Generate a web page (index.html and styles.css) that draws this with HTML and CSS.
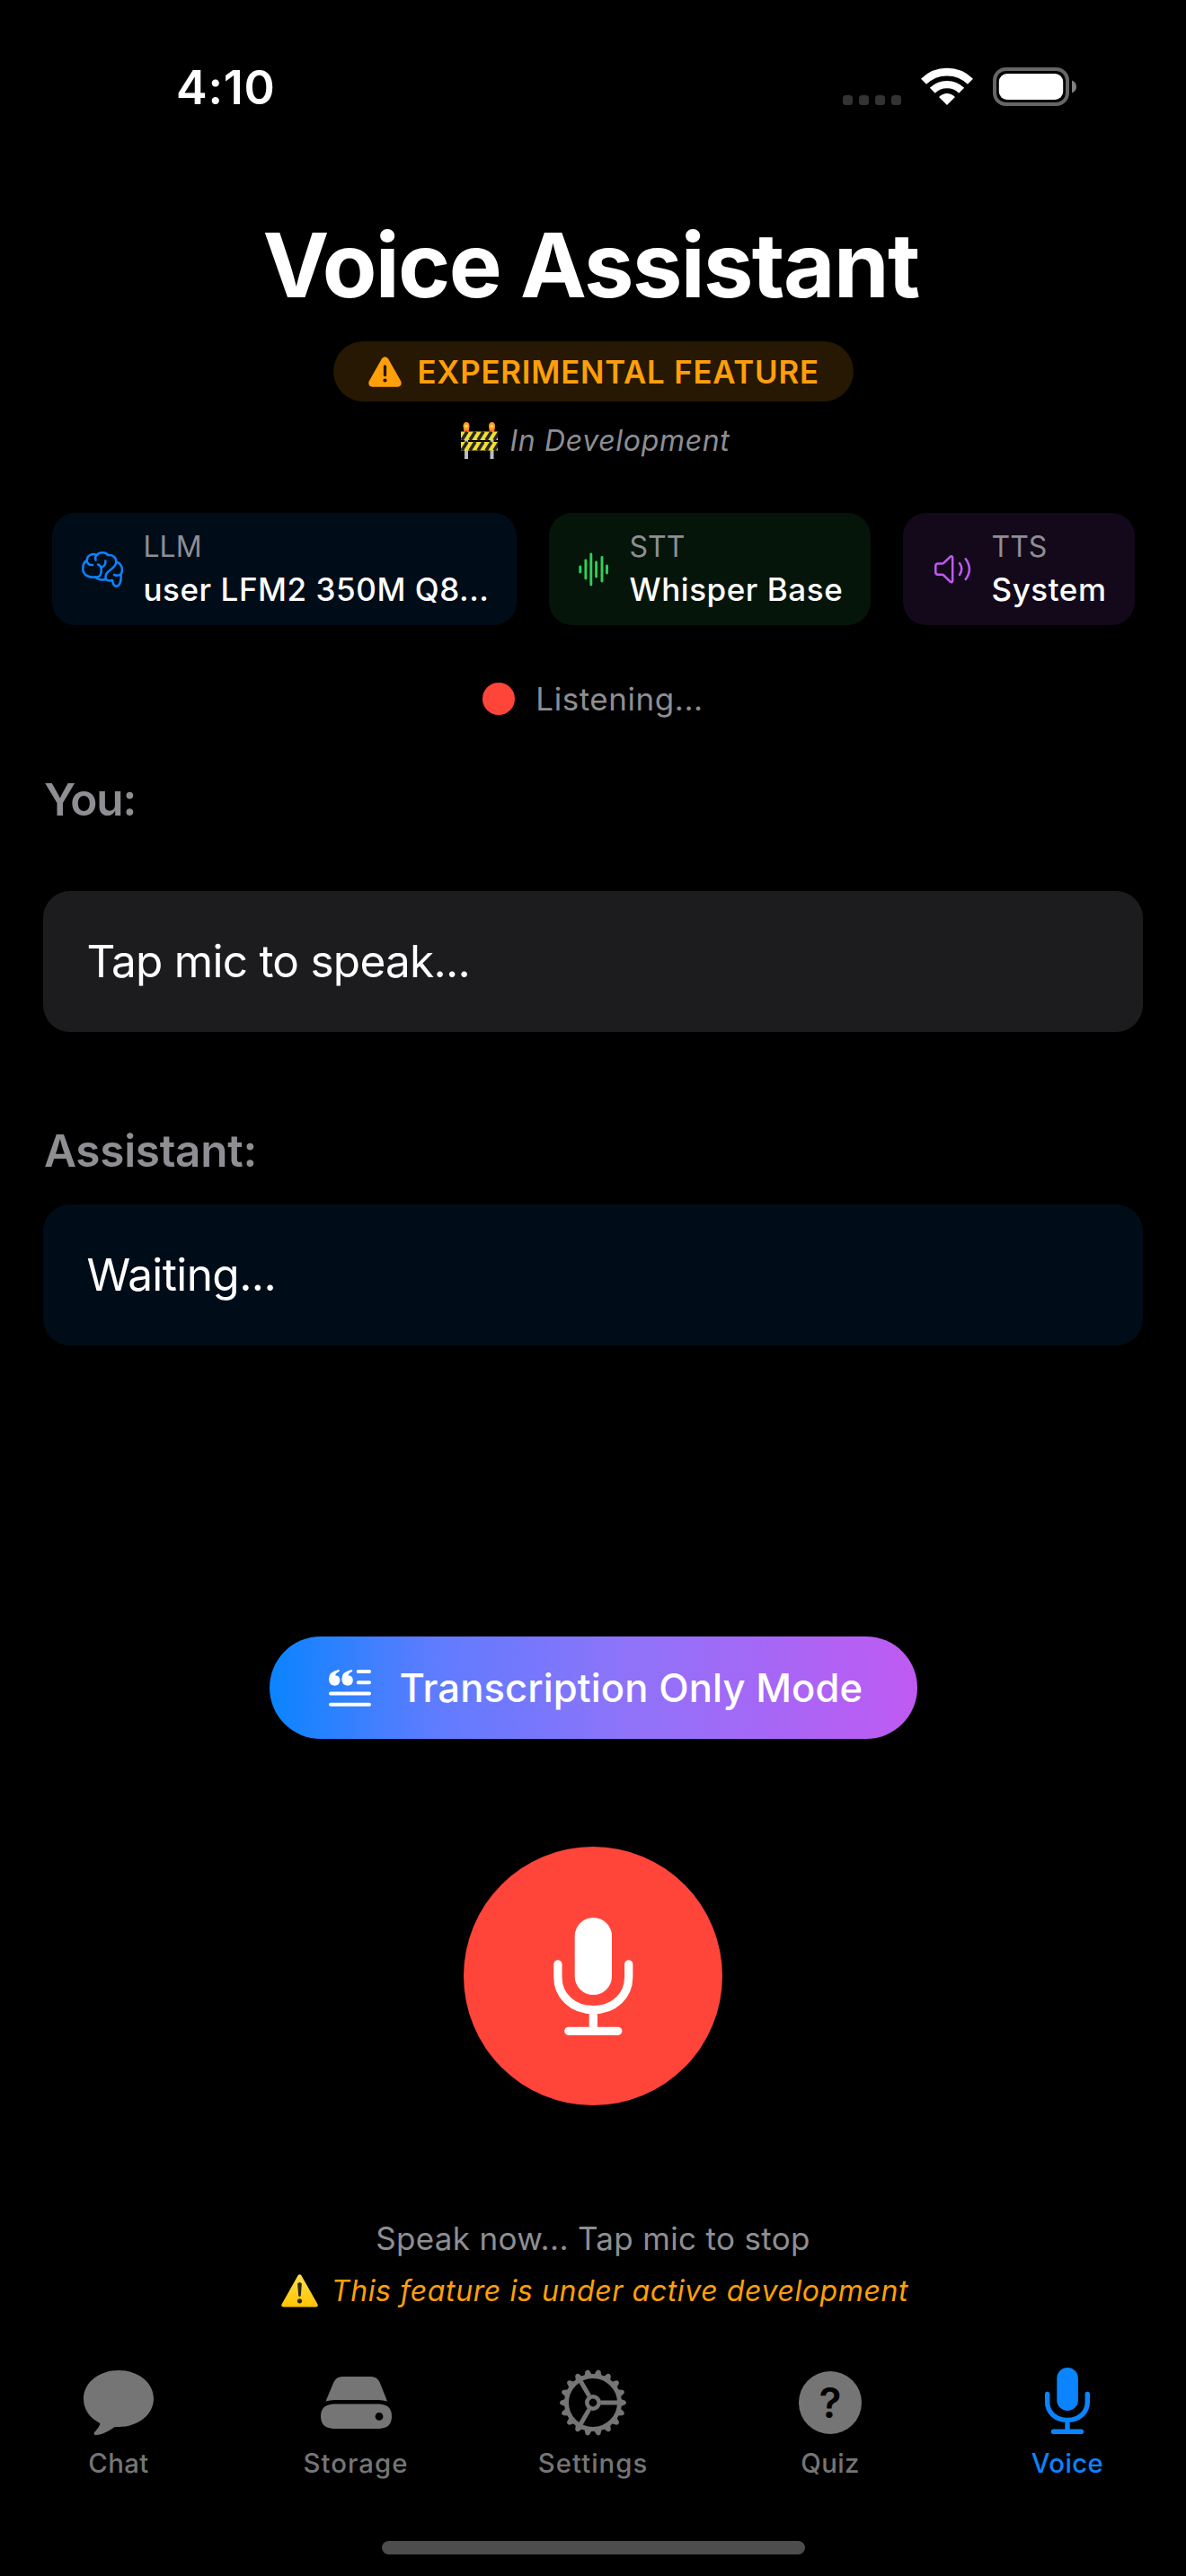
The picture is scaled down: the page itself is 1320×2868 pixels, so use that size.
FILE: index.html
```html
<!DOCTYPE html>
<html lang="en">
<head>
<meta charset="utf-8">
<title>Voice Assistant</title>
<link rel="stylesheet" href="styles.css">
</head>
<body>
<div class="screen">
  <header class="status-bar">
    <span class="clock">4:10</span>
    <div class="status-icons">
      <div class="cell"><i></i><i></i><i></i><i></i></div>
      <svg class="wifi" width="58" height="42" viewBox="0 0 58 42">
        <g fill="none" stroke="#fff">
          <path d="M3 15.800A37 37 0 0 1 55 15.800" stroke-width="8.600"/>
          <path d="M12.800 25.800A23 23 0 0 1 45.200 25.800" stroke-width="8.400"/>
        </g>
        <path d="M29 42L20 33Q29 25 38 33Z" fill="#fff"/>
      </svg>
      <svg class="battery" width="93" height="43" viewBox="0 0 93 43">
        <rect x="2" y="2" width="81" height="39" rx="12.500" fill="none" stroke="#666" stroke-width="4"/>
        <rect x="6.800" y="7" width="71.400" height="29" rx="9" fill="#fff"/>
        <path d="M88 14.500Q93 16.500 93 21.500T88 28.500Z" fill="#808080"/>
      </svg>
    </div>
  </header>

  <main class="content">
    <h1 class="title">Voice Assistant</h1>
    <div class="badge">
      <svg width="37" height="34" viewBox="0 0 37 34">
        <path d="M15 2.300Q18.500-1.800 22 2.300L36.300 27.500Q38 33 32.500 33.800H4.500Q-1 33 .7 27.500Z" fill="#ff9f0a"/>
        <path d="M18.500 11V20.500" stroke="#261802" stroke-width="3.300" stroke-linecap="round"/>
        <circle cx="18.500" cy="26.500" r="2.100" fill="#261802"/>
      </svg>
      <span>EXPERIMENTAL FEATURE</span>
    </div>
    <div class="dev-note">
      <svg width="41" height="41" viewBox="0 0 41 41">
        <path d="M6 9V41M34.500 9V41" stroke="#b9bcc0" stroke-width="4"/>
        <g fill="#f3df2b"><rect y="10.500" width="41" height="9.500"/><rect y="22" width="41" height="9.500"/></g>
        <path d="M1 20L7 10.500M10 20L16 10.500M19 20L25 10.500M28 20L34 10.500M37 20L43 10.500M1 31.500L7 22M10 31.500L16 22M19 31.500L25 22M28 31.500L34 22M37 31.500L43 22" stroke="#26262a" stroke-width="3.600"/>
        <g fill="#f2602c"><path d="M3 7H9V10.500H3ZM31.500 7H37.500V10.500H31.500Z"/></g>
        <g fill="#ff9a1f"><ellipse cx="6" cy="4.500" rx="3.500" ry="4.500"/><ellipse cx="34.500" cy="4.500" rx="3.500" ry="4.500"/></g>
        <g fill="#ffe45c"><circle cx="6" cy="4.500" r="1.700"/><circle cx="34.500" cy="4.500" r="1.700"/></g>
      </svg>
      <em>In Development</em>
    </div>

    <section class="models">
      <div class="chip llm">
        <svg width="46" height="40" viewBox="0 0 46 40" fill="none" stroke="#0a84ff" stroke-width="2.500" stroke-linecap="round" stroke-linejoin="round">
          <path d="M5.700 10C5.500 4.500 11.500 1.500 16.800 4C19.500 .5 26.500 .3 29 4C34.500 3.500 38.500 6.500 38.300 11.500C44.500 13 46.500 20.500 43.500 25.500C44 31 43 38.700 38.500 38.700C35 38.700 34.500 35 34 32C31 33 28.500 32.300 26.800 31C23 32 17.500 31.500 14.800 28.500C7 29.500 1.300 25.500 1.300 19.500C1.300 15 2.500 11.500 5.700 10Z"/>
          <path d="M5.700 10C6 13.500 8.500 15.500 12 15M16.800 4C15.300 5 14.800 7.500 15.500 9.500M18 14.500C22.500 16 22.500 22 20.700 26C19.500 28.300 17 28.800 14.800 28.500M21.600 17.500C25 17 27 14 26.300 10.500M38.300 11.500C38 20 27.500 20 26.700 27C26.500 28.500 26.500 29.500 26.800 31M43.500 25.500C41 27 38.500 27 36 26"/>
        </svg>
        <div class="chip-text"><span class="kind">LLM</span><span class="model">user LFM2 350M Q8...</span></div>
      </div>
      <div class="chip stt">
        <svg width="34" height="38" viewBox="0 0 34 38" stroke="#30d158" stroke-width="2.900" stroke-linecap="round">
          <path d="M1.800 16V22M7.900 9V29M13.800 2V36M19.600 11V27M26 5.500V32M31.500 15V23"/>
        </svg>
        <div class="chip-text"><span class="kind">STT</span><span class="model">Whisper Base</span></div>
      </div>
      <div class="chip tts">
        <svg width="41" height="32" viewBox="0 0 41 32" fill="none" stroke="#bf5af2" stroke-width="2.500" stroke-linecap="round" stroke-linejoin="round">
          <path d="M4 9.500H8.500Q9.600 9.500 10.300 8.800L17.600 1.900Q20 .3 20.200 3V28.500Q20 31.200 17.600 29.600L10.300 22.500Q9.600 21.700 8.500 21.700H4Q1.300 21.700 1.300 19V12.200Q1.300 9.500 4 9.500Z"/>
          <path d="M28 9Q32.500 15.500 28 22M34.800 4.300Q43 15.500 34.800 27"/>
        </svg>
        <div class="chip-text"><span class="kind">TTS</span><span class="model">System</span></div>
      </div>
    </section>

    <div class="session"><i class="rec-dot"></i><span>Listening...</span></div>

    <section class="exchange">
      <h2 class="speaker you">You:</h2>
      <div class="bubble user">Tap mic to speak...</div>
      <h2 class="speaker bot">Assistant:</h2>
      <div class="bubble reply">Waiting...</div>
    </section>

    <button class="mode" type="button">
      <svg width="47" height="41" viewBox="0 0 47 41" fill="#fff">
        <path id="q" d="M10.800 0Q12.800 .4 11.300 2.100Q7.800 3.600 7 6.200Q12.400 6.600 12.400 11.800Q12.200 17.600 6.400 17.700Q0 17.400 0 10Q.3 2 10.800 0Z"/>
        <use href="#q" x="14.400"/>
        <path d="M32.700 2H45M32.700 14.300H45M2 26.500H45M2 38.700H45" stroke="#fff" stroke-width="4" stroke-linecap="round"/>
      </svg>
      <span>Transcription Only Mode</span>
    </button>

    <button class="mic" type="button" aria-label="Microphone">
      <svg width="89" height="131" viewBox="0 0 89 131">
        <rect x="23.700" y="0" width="41.300" height="86" rx="20.600" fill="#fff"/>
        <path d="M4.900 51.800V66C4.900 87 21 102.700 44.300 102.700S83.700 87 83.700 66V51.800M44.300 102.700V126M16.800 126.300H71.800" fill="none" stroke="#fff" stroke-width="9.300" stroke-linecap="round"/>
      </svg>
    </button>

    <p class="hint">Speak now... Tap mic to stop</p>
    <div class="caution">
      <svg width="41" height="37" viewBox="0 0 41 37">
        <defs><linearGradient id="sun" x1="0" y1="0" x2="0" y2="1"><stop offset="0" stop-color="#ffdf4f"/><stop offset="1" stop-color="#ffc400"/></linearGradient></defs>
        <path d="M18.500 1.500Q20.500-.8 22.500 1.500L40.500 33.500Q41.500 36.300 38.500 36.500H2.500Q-.5 36.300 .5 33.500Z" fill="url(#sun)"/>
        <path d="M18.100 10.500Q20.500 7.500 22.900 10.500L21.800 24Q20.500 25.800 19.200 24Z" fill="#2b2716"/>
        <circle cx="20.500" cy="29.800" r="2.600" fill="#2b2716"/>
      </svg>
      <em>This feature is under active development</em>
    </div>
  </main>

  <nav class="tabs">
    <a class="tab chat">
      <svg width="78" height="74" viewBox="0 0 78 74" fill="currentColor">
        <path d="M39 1C60.500 1 78 14.500 78 32.500S60.500 64 39 64C37.500 64 35.500 63.900 34.300 64.300C28.500 68.500 20 73.500 13 73C11.300 72.500 11.300 71 12.300 69.800C15.500 66 18.500 62.500 18.300 60C7 54 0 45 0 32.500C0 14.500 17.500 1 39 1Z"/>
      </svg>
      <span>Chat</span>
    </a>
    <a class="tab storage">
      <svg width="79" height="74" viewBox="0 0 79 74" fill="currentColor">
        <path d="M24 8H56Q62.500 8 65.500 14L74 35.600Q69 34 64 34H15.500Q10.500 34 5.500 35.600L14.500 14Q17.500 8 24 8Z"/>
        <path fill-rule="evenodd" d="M14 38.500H65.500Q79 39.300 79 52.300T65.500 66H14Q0 65.300 0 52.300T14 38.500ZM65 48A4.400 4.400 0 1 0 65 56.800A4.400 4.400 0 1 0 65 48Z"/>
      </svg>
      <span class="wide">Storage</span>
    </a>
    <a class="tab settings">
      <svg width="76" height="74" viewBox="-38 -37 76 74" fill="none" stroke="currentColor" stroke-width="5">
        <circle r="29.500"/><circle r="6.700" stroke-width="4.600"/>
        <path d="M8.500 0H28M-4.250 7.400L-14 24.200M-4.250-7.400L-14-24.200"/>
        <g fill="currentColor" stroke="none">
          <g id="t6"><g id="t3"><path id="t" d="M30-4.600L35.700-2.300Q38.300 0 35.700 2.300L30 4.600Z"/><use href="#t" transform="rotate(20)"/><use href="#t" transform="rotate(40)"/></g><use href="#t3" transform="rotate(60)"/></g>
          <use href="#t6" transform="rotate(120)"/><use href="#t6" transform="rotate(240)"/>
        </g>
      </svg>
      <span class="wide">Settings</span>
    </a>
    <a class="tab quiz">
      <div class="round"><b>?</b></div>
      <span>Quiz</span>
    </a>
    <a class="tab voice">
      <svg width="50" height="76" viewBox="0 0 50 76">
        <rect x="13.300" y="1" width="23.600" height="48" rx="11.800" fill="currentColor"/>
        <path d="M2.700 30.500V39.500C2.700 51 12 59.400 25 59.400S47.300 51 47.300 39.500V30.500M25 59.400V72M9.500 72.200H40.500" fill="none" stroke="currentColor" stroke-width="5.400" stroke-linecap="round"/>
      </svg>
      <span>Voice</span>
    </a>
  </nav>
  <div class="home-indicator"></div>
</div>
</body>
</html>
```
FILE: styles.css
```css
* { box-sizing: border-box; margin: 0; padding: 0; }
body { background: #000; color: #fff; font-family: Inter, "Liberation Sans", sans-serif; }
svg { display: block; flex: none; }
em { font-style: italic; }
button { border: 0; color: inherit; font-family: inherit; }
span, em, p, h1, h2 { white-space: nowrap; }

.screen { width: 1320px; height: 2868px; display: flex; flex-direction: column; align-items: center; overflow: hidden; }
.screen > * { flex: none; }

/* status bar */
.status-bar { width: 100%; height: 235px; padding: 68px 122px 0 196px; display: flex; justify-content: space-between; align-items: flex-start; }
.clock { font-size: 52px; font-weight: 600; line-height: 60px; letter-spacing: .8px; }
.status-icons { display: flex; align-items: flex-start; padding-top: 7px; }
.cell { display: flex; gap: 7px; padding-top: 31px; margin-right: 22px; }
.cell i { width: 11px; height: 11px; border-radius: 3.500px; background: #333; }
.battery { margin-left: 22px; }

/* heading */
.content { width: 100%; display: flex; flex-direction: column; align-items: center; }
.title { margin-right: 5px; font-size: 99px; font-weight: 700; line-height: 120px; letter-spacing: -1.600px; }
.badge { width: 579px; height: 67px; margin-top: 25px; padding-left: 39px; border-radius: 34px; background: #261802; color: #ff9f0a; display: flex; align-items: center; gap: 18px; font-size: 34.800px; font-weight: 600; letter-spacing: .8px; }
.dev-note { height: 41px; margin-top: 23px; padding-left: 6px; display: flex; align-items: center; gap: 13px; color: #8e8e93; font-size: 32px; letter-spacing: .68px; }

/* model chips */
.models { width: 1205px; height: 125px; margin-top: 60px; display: flex; gap: 36px; }
.chip { display: flex; align-items: center; border-radius: 26px; }
.chip-text { display: flex; flex-direction: column; padding-top: 2px; }
.kind { color: #8e8e93; font-size: 32px; line-height: 43px; }
.model { font-size: 35px; font-weight: 500; line-height: 52px; letter-spacing: .55px; }
.llm { width: 517px; padding-left: 33px; gap: 23px; background: #000d19; }
.stt { width: 358px; padding-left: 33px; gap: 23px; background: #05150a; }
.tts { width: 258px; padding-left: 35px; gap: 23px; background: #13091a; }

/* session state */
.session { height: 36px; margin-top: 64px; display: flex; align-items: center; gap: 23px; color: #8e8e93; font-size: 35px; letter-spacing: .54px; }
.rec-dot { width: 36px; height: 36px; border-radius: 50%; background: #ff453a; }

/* conversation */
.exchange { width: 100%; padding: 0 48px; margin-top: 64px; }
.speaker { padding-left: 1px; color: #8e8e93; font-size: 49.500px; font-weight: 600; line-height: 60px; }
.you { letter-spacing: -1.100px; margin-bottom: 72px; }
.bot { letter-spacing: -.3px; margin: 102px 0 30px; }
.bubble { height: 157px; padding-left: 48.500px; border-radius: 30px; font-size: 49.500px; line-height: 157px; letter-spacing: -.75px; }
.user { background: #1c1c1e; }
.reply { background: #000d19; letter-spacing: -.6px; }

/* actions */
.mode { width: 721px; height: 114px; margin-top: 324px; padding-left: 66px; border-radius: 57px; background: linear-gradient(90deg, #0a84ff, #5e7cff 25%, #8e73f9 55%, #bf5af2); display: flex; align-items: center; gap: 32px; font-size: 43.600px; font-weight: 500; letter-spacing: .08px; }
.mic { width: 288px; height: 288px; margin-top: 120px; border-radius: 50%; background: #ff453a; display: flex; justify-content: center; align-items: flex-start; padding-top: 79px; }
.hint { margin-top: 123px; color: #8e8e93; font-size: 35px; line-height: 50px; letter-spacing: .33px; }
.caution { height: 41px; margin-top: 13px; padding-left: 4px; display: flex; align-items: center; gap: 15px; color: #ff9f0a; font-size: 32px; letter-spacing: .61px; }

/* tab bar */
.tabs { width: 100%; height: 191px; margin-top: 67px; display: grid; grid-template-columns: repeat(5, 264px); }
.tab { height: 123px; display: flex; flex-direction: column; align-items: center; color: #757575; font-size: 29.300px; font-weight: 500; line-height: 36px; letter-spacing: .43px; }
.tab span { margin-top: auto; }
.tab .wide { letter-spacing: 1.050px; }
.round { width: 70px; height: 70px; margin-top: 2px; border-radius: 50%; background: currentColor; display: flex; align-items: center; justify-content: center; }
.round b { color: #000; font-size: 46px; font-weight: 600; line-height: 70px; letter-spacing: 0; }
.voice { color: #0a84ff; }
.voice svg { margin-top: -3px; }
.home-indicator { width: 471px; height: 15px; border-radius: 8px; background: #4d4d4d; }
```
